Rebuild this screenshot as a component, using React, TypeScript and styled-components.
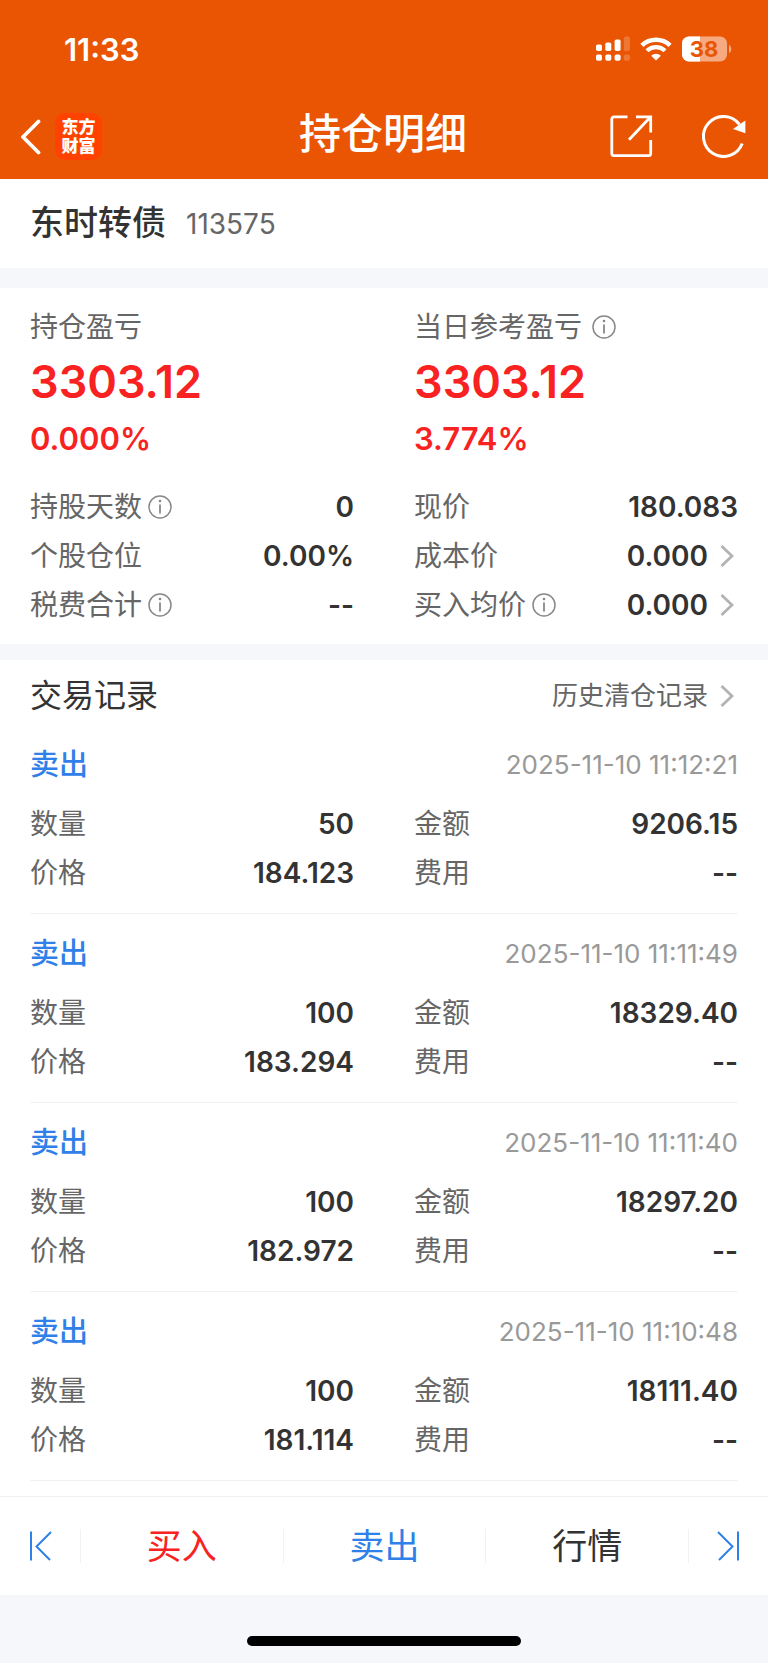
import React from 'react';
import styled, { createGlobalStyle } from 'styled-components';

const color = {
  brand: '#ea5504',
  logo: '#ff4200',
  ink: '#333333',
  label: '#666666',
  muted: '#999999',
  rise: '#f82222',
  blue: '#2f80e8',
  gap: '#f5f7fa',
  line: '#f2f2f2',
};

const GlobalStyle = createGlobalStyle`
  * { box-sizing: border-box; }
  body {
    margin: 0;
    background: ${color.gap};
    color: ${color.ink};
    font-family: Inter, "Noto Sans CJK SC", sans-serif;
    font-size: 28px;
  }
  h1, h2, h3, p, dl, dt, dd, ul { margin: 0; padding: 0; font-weight: inherit; }
  ul { list-style: none; }
  button { margin: 0; padding: 0; border: 0; background: none; font: inherit; color: inherit; cursor: pointer; }
  a { color: inherit; text-decoration: none; }
  svg { display: block; flex: none; }
`;

const Page = styled.div`
  min-height: 100vh;
  display: flex;
  flex-direction: column;
`;

const Header = styled.header`
  background: ${color.brand};
  color: #fff;
`;

const StatusBar = styled.div`
  height: 96px;
  padding: 2px 36px 0 64px;
  display: flex;
  align-items: center;
  justify-content: space-between;
`;

const Clock = styled.time`
  font-size: 31px;
  font-weight: 600;
`;

const StatusIcons = styled.div`
  display: flex;
  align-items: center;
  gap: 10px;
`;

const NavBar = styled.div`
  height: 83px;
  padding: 0 22px 2px 20px;
  display: grid;
  grid-template-columns: 1fr auto 1fr;
  align-items: center;
`;

const NavSide = styled.div<{ $end?: boolean }>`
  display: flex;
  align-items: center;
  justify-content: ${(p) => (p.$end ? 'flex-end' : 'flex-start')};
  gap: ${(p) => (p.$end ? 49 : 13)}px;
`;

const Title = styled.h1`
  font-size: 42px;
  line-height: 48px;
  font-weight: 500;
  padding-bottom: 6px;
`;

const Logo = styled.div`
  width: 47px;
  height: 47px;
  border-radius: 10px;
  background: ${color.logo};
  display: flex;
  align-items: center;
  justify-content: center;
  text-align: center;
  font-size: 17px;
  line-height: 19px;
  font-weight: 900;
`;

const Security = styled.section`
  height: 89px;
  padding: 0 30px;
  display: flex;
  align-items: center;
  gap: 20px;
  background: #fff;
`;

const SecurityName = styled.h2`
  font-size: 34px;
  line-height: 40px;
  font-weight: 500;
  padding-bottom: 2px;
`;

const SecurityCode = styled.span`
  color: ${color.label};
`;

const Panel = styled.section<{ $gap: number; $bottom: number }>`
  margin-top: ${(p) => p.$gap}px;
  padding: 0 30px ${(p) => p.$bottom}px;
  background: #fff;
`;

const Columns = styled.div`
  display: grid;
  grid-template-columns: 1fr 1fr;
  column-gap: 60px;
`;

const Profit = styled.div`
  padding: 16px 0 18px;
`;

const Label = styled.dt`
  display: flex;
  align-items: center;
  gap: 6px;
  line-height: 40px;
  color: ${color.label};
`;

const ProfitLabel = styled.p`
  height: 46px;
  display: flex;
  align-items: center;
  gap: 10px;
  line-height: 40px;
  color: ${color.label};
`;

const Amount = styled.p`
  font-size: 45px;
  line-height: 64px;
  font-weight: 600;
  color: ${color.rise};
`;

const Percent = styled.p`
  font-size: 31px;
  line-height: 50px;
  font-weight: 600;
  color: ${color.rise};
`;

const Row = styled.div`
  height: 49px;
  display: flex;
  align-items: center;
  justify-content: space-between;
`;

const Value = styled.dd`
  line-height: 40px;
  font-weight: 600;
`;

const ValueLink = styled.a`
  display: flex;
  align-items: center;
  gap: 12px;
  padding-right: 4px;
`;

const InfoButton = styled.button`
  display: flex;
`;

const RecordsHead = styled.div`
  height: 65px;
  padding-top: 6px;
  display: flex;
  align-items: center;
  justify-content: space-between;
`;

const RecordsTitle = styled.h2`
  font-size: 32px;
  line-height: 40px;
`;

const HistoryLink = styled(ValueLink)`
  font-size: 26px;
  line-height: 40px;
  color: ${color.label};
`;

const Record = styled.li`
  padding: 17px 0 16px;
  border-bottom: 1px solid ${color.line};
`;

const RecordHead = styled.div`
  height: 44px;
  margin-bottom: 13px;
  display: flex;
  align-items: center;
  justify-content: space-between;
`;

const Side = styled.h3`
  font-size: 29px;
  line-height: 40px;
  padding-top: 2px;
  font-weight: 500;
  color: ${color.blue};
`;

const Stamp = styled.time`
  font-size: 26px;
  color: ${color.muted};
`;

const ActionBar = styled.nav`
  height: 99px;
  border-top: 1px solid ${color.line};
  background: #fff;
  display: grid;
  grid-template-columns: 80px 1fr 1fr 1fr 80px;
  align-items: center;
`;

const Action = styled.button<{ $tone: string }>`
  height: 34px;
  display: flex;
  align-items: center;
  justify-content: center;
  font-size: 35px;
  line-height: 34px;
  color: ${(p) => p.$tone};

  & + & {
    border-left: 1px solid ${color.line};
  }
`;

const HomeArea = styled.footer`
  height: 68px;
  display: flex;
  justify-content: center;
  padding-top: 41px;
`;

const HomeIndicator = styled.div`
  width: 274px;
  height: 10px;
  border-radius: 5px;
  background: #000;
`;

function SignalIcon() {
  const bars = [8, 6, 3, 0];
  return (
    <svg width="34" height="26" viewBox="0 0 34 26" fill="#fff" aria-hidden="true">
      {bars.map((top, i) => (
        <g key={top} opacity={i === 3 ? 0.2 : 1}>
          <rect x={i * 9.3} y={top + 0.5} width="6" height={14.5 - top} rx="1.8" />
          <rect x={i * 9.3} y="18.5" width="6" height="6.3" rx="1.8" />
        </g>
      ))}
    </svg>
  );
}

function WifiIcon() {
  return (
    <svg width="32" height="24" viewBox="0 0 32 24" aria-hidden="true">
      <path d="M1.9 8.4a20.3 20.3 0 0 1 28.2 0" fill="none" stroke="#fff" strokeWidth="4.4" />
      <path d="M7 13.8a12.8 12.8 0 0 1 18 0" fill="none" stroke="#fff" strokeWidth="4.2" />
      <path d="M16 23.6l-4.9-4.8a7 7 0 0 1 9.8 0z" fill="#fff" />
    </svg>
  );
}

function BatteryIcon() {
  return (
    <svg width="50" height="26" viewBox="0 0 50 26" role="img" aria-label="38%">
      <clipPath id="charge"><rect width="18" height="26" /></clipPath>
      <rect width="45" height="25" y="0.5" rx="7" fill="#fff" opacity="0.5" />
      <rect width="45" height="25" y="0.5" rx="7" fill="#fff" clipPath="url(#charge)" />
      <path d="M47 9c3 1 3 7 0 8z" fill="#fff" opacity="0.5" />
      <text x="22" y="21" textAnchor="middle" fontSize="22" fontWeight="700" fill={color.brand}>38</text>
    </svg>
  );
}

function BackIcon() {
  return (
    <svg width="22" height="36" viewBox="0 0 22 36" fill="none" stroke="#fff" strokeWidth="3.8" strokeLinecap="round" strokeLinejoin="round">
      <path d="M18.5 2.5L3 18L18.5 33.5" />
    </svg>
  );
}

function ShareIcon() {
  return (
    <svg width="43" height="43" viewBox="0 0 43 43" fill="none" stroke="#fff" strokeWidth="2.8">
      <path d="M17.5 1.8H4a2.2 2.2 0 0 0-2.2 2.2v34.500a2.200 2.200 0 0 0 2.200 2.200h34.500a2.200 2.200 0 0 0 2.200-2.200V25" />
      <path d="M26 1.8h14.700V17.500M40.200 2.300L19 24.800" />
    </svg>
  );
}

function RefreshIcon() {
  return (
    <svg width="44" height="43" viewBox="0 0 44 43">
      <path d="M40.2 28.5A20 20 0 1 1 37.500 9.500" fill="none" stroke="#fff" strokeWidth="3" />
      <path d="M43.400 5.500V18.300L31 14z" fill="#fff" />
    </svg>
  );
}

function InfoIcon() {
  return (
    <svg width="24" height="24" viewBox="0 0 24 24" fill="none" stroke="#888" strokeWidth="1.500">
      <circle cx="12" cy="12" r="11" />
      <path d="M12 9.500v9" strokeWidth="1.800" />
      <circle cx="12" cy="6" r="1.300" fill="#888" stroke="none" />
    </svg>
  );
}

function ChevronIcon() {
  return (
    <svg width="14" height="22" viewBox="0 0 14 22" fill="none" stroke="#b3b3b3" strokeWidth="2.800">
      <path d="M1.500 1L12 11L1.500 21" />
    </svg>
  );
}

function StepIcon({ next }: { next?: boolean }) {
  return (
    <svg width="23" height="30" viewBox="0 0 23 30" fill="none" stroke={color.blue} strokeWidth="2">
      <path d={next ? 'M1 1L15.5 15.5L2 29M21 0.5V29.5' : 'M22 1L7.5 15.5L21 29M2 0.5V29.5'} />
    </svg>
  );
}

function Info({ about }: { about: string }) {
  return (
    <InfoButton type="button" aria-label={`${about}说明`}>
      <InfoIcon />
    </InfoButton>
  );
}

type FieldProps = { label: string; value: string; info?: boolean; link?: boolean };

function Field({ label, value, info, link }: FieldProps) {
  return (
    <Row>
      <Label>
        {label}
        {info && <Info about={label} />}
      </Label>
      <Value>
        {link ? (
          <ValueLink href="#detail">
            {value}
            <ChevronIcon />
          </ValueLink>
        ) : (
          value
        )}
      </Value>
    </Row>
  );
}

const leftFields: FieldProps[] = [
  { label: '持股天数', value: '0', info: true },
  { label: '个股仓位', value: '0.00%' },
  { label: '税费合计', value: '--', info: true },
];

const rightFields: FieldProps[] = [
  { label: '现价', value: '180.083' },
  { label: '成本价', value: '0.000', link: true },
  { label: '买入均价', value: '0.000', info: true, link: true },
];

const records = [
  { time: '2025-11-10 11:12:21', count: '50', price: '184.123', total: '9206.15' },
  { time: '2025-11-10 11:11:49', count: '100', price: '183.294', total: '18329.40' },
  { time: '2025-11-10 11:11:40', count: '100', price: '182.972', total: '18297.20' },
  { time: '2025-11-10 11:10:48', count: '100', price: '181.114', total: '18111.40' },
];

export default function App() {
  return (
    <Page lang="zh-CN">
      <GlobalStyle />
      <Header>
        <StatusBar>
          <Clock>11:33</Clock>
          <StatusIcons>
            <SignalIcon />
            <WifiIcon />
            <BatteryIcon />
          </StatusIcons>
        </StatusBar>
        <NavBar>
          <NavSide>
            <button type="button" aria-label="返回"><BackIcon /></button>
            <Logo>东方<br />财富</Logo>
          </NavSide>
          <Title>持仓明细</Title>
          <NavSide $end>
            <button type="button" aria-label="分享"><ShareIcon /></button>
            <button type="button" aria-label="刷新"><RefreshIcon /></button>
          </NavSide>
        </NavBar>
      </Header>

      <Security>
        <SecurityName>东时转债</SecurityName>
        <SecurityCode>113575</SecurityCode>
      </Security>

      <Panel $gap={20} $bottom={15}>
        <Columns>
          <Profit>
            <ProfitLabel>持仓盈亏</ProfitLabel>
            <Amount>3303.12</Amount>
            <Percent>0.000%</Percent>
          </Profit>
          <Profit>
            <ProfitLabel>当日参考盈亏<Info about="当日参考盈亏" /></ProfitLabel>
            <Amount>3303.12</Amount>
            <Percent>3.774%</Percent>
          </Profit>
          <dl>{leftFields.map((f) => <Field key={f.label} {...f} />)}</dl>
          <dl>{rightFields.map((f) => <Field key={f.label} {...f} />)}</dl>
        </Columns>
      </Panel>

      <Panel $gap={16} $bottom={15}>
        <RecordsHead>
          <RecordsTitle>交易记录</RecordsTitle>
          <HistoryLink href="#history">
            历史清仓记录
            <ChevronIcon />
          </HistoryLink>
        </RecordsHead>
        <ul>
          {records.map((r) => (
            <Record key={r.time}>
              <RecordHead>
                <Side>卖出</Side>
                <Stamp>{r.time}</Stamp>
              </RecordHead>
              <Columns>
                <dl>
                  <Field label="数量" value={r.count} />
                  <Field label="价格" value={r.price} />
                </dl>
                <dl>
                  <Field label="金额" value={r.total} />
                  <Field label="费用" value="--" />
                </dl>
              </Columns>
            </Record>
          ))}
        </ul>
      </Panel>

      <ActionBar>
        <Action type="button" $tone={color.blue} aria-label="上一只"><StepIcon /></Action>
        <Action type="button" $tone={color.rise}>买入</Action>
        <Action type="button" $tone={color.blue}>卖出</Action>
        <Action type="button" $tone={color.ink}>行情</Action>
        <Action type="button" $tone={color.blue} aria-label="下一只"><StepIcon next /></Action>
      </ActionBar>
      <HomeArea>
        <HomeIndicator />
      </HomeArea>
    </Page>
  );
}
